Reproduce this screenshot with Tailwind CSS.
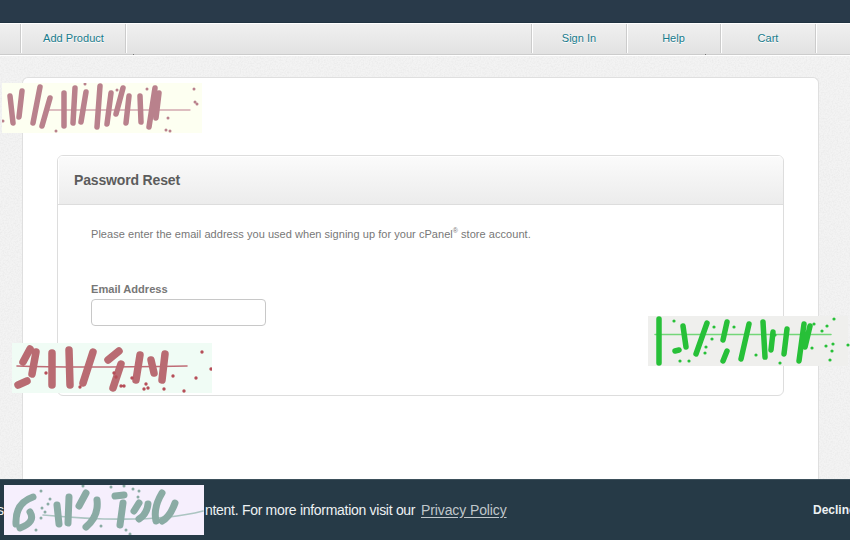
<!DOCTYPE html>
<html lang="en">
<head>
<meta charset="utf-8">
<title>Password Reset</title>
<script src="https://cdn.jsdelivr.net/npm/@tailwindcss/browser@4"></script>
</head>
<body class="relative flex h-[540px] w-[850px] flex-col overflow-hidden bg-[#f3f3f3] font-['Liberation_Sans',Arial,sans-serif] text-[11px] text-[#777]">
<svg class="absolute inset-0" width="850" height="540" aria-hidden="true">
  <filter id="grain"><feTurbulence type="fractalNoise" baseFrequency=".65" numOctaves="2"/><feColorMatrix values="0 0 0 0 .5  0 0 0 0 .5  0 0 0 0 .5  .3 0 0 0 -.11"/></filter>
  <rect width="850" height="540" filter="url(#grain)"/>
</svg>

<header class="relative shrink-0">
  <div class="h-[23px] border-b border-[#203341] bg-[#293a4a]"></div>
  <nav class="flex h-8 border-t border-b border-t-white border-b-[#ccc] bg-linear-to-b from-[#f0f0f0] to-[#e2e2e2] text-[11px] tracking-[0.03px] text-[#187b8c] shadow-[0_1px_0_#fff] [text-shadow:0_1px_0_#fff]">
    <div class="h-[29px] w-[21px] border-r border-[#ccc]"></div>
    <a class="flex h-[29px] w-[105px] justify-center border-r border-l border-r-[#ccc] border-l-white pt-[4px] leading-5">Add Product</a>
    <div class="h-[29px] flex-1 border-l border-white"></div>
    <a class="flex h-[29px] w-[96px] justify-center border-r border-l border-[#ccc] pt-[4px] leading-5 shadow-[inset_1px_0_0_#fff]">Sign In</a>
    <a class="flex h-[29px] w-[94px] justify-center border-r border-[#ccc] pt-[4px] leading-5 shadow-[inset_1px_0_0_#fff]">Help</a>
    <a class="flex h-[29px] w-[95px] justify-center border-r border-[#ccc] pt-[4px] leading-5 shadow-[inset_1px_0_0_#fff]">Cart</a>
    <div class="h-[29px] w-[34px] border-l border-white"></div>
  </nav>
  <i class="absolute top-[54px] left-[133px] h-px w-px bg-[#777]"></i>
  <i class="absolute top-[54px] left-[705px] h-px w-px bg-[#777]"></i>
</header>

<main class="relative mt-[22px] ml-[22px] w-[797px] flex-1 rounded-t-[6px] border border-b-0 border-[#dfdfdf] bg-white px-[34px] pt-[77px]">
  <section class="h-[241px] w-[727px] overflow-hidden rounded-[6px] border border-[#ddd]">
    <h1 class="flex h-[49px] items-center border-b border-[#ddd] bg-linear-to-b from-[#fbfbfb] to-[#ececec] px-[16px] text-[14px] leading-5 font-bold tracking-[-0.16px] text-[#5c5c5c] shadow-[inset_1px_1px_0_#fff]">Password Reset</h1>
    <div class="px-[33px] pt-[19px]">
      <p class="h-5 text-[11px] leading-5 tracking-[0.04px] whitespace-nowrap">Please enter the email address you used when signing up for your cPanel<sup class="relative top-[-5px] align-baseline text-[7px] leading-none">®</sup> store account.</p>
      <label class="mt-[35px] block h-5 text-[11.1px] leading-5 font-bold">Email Address</label>
      <input aria-label="Email Address" class="block h-[27px] w-[175px] rounded-[4px] border border-[#c8c8c8] bg-white">
    </div>
  </section>
</main>

<footer class="relative flex h-[61px] shrink-0 items-center border-t border-[#3d505b] bg-[#263a47] text-[14px] whitespace-nowrap text-[#edf1f3]">
  <span class="-ml-[3px] w-[208px]">s</span>
  <span class="w-[216px] tracking-[-0.29px]">ntent. For more information visit our</span>
  <a class="tracking-[-0.11px] text-[#c0c7cb] underline underline-offset-2">Privacy Policy</a>
  <b class="absolute left-[813px] text-[12px]">Decline</b>
</footer>

<!-- Decorative ink tiles -->
<svg class="absolute top-[83px] left-[2px]" width="200" height="50" fill="none" stroke="#b9818c" stroke-linecap="round" stroke-linejoin="round">
  <rect width="200" height="50" fill="#fdfff1" stroke="none"/>
  <path stroke="#d2a9b0" stroke-width="1.3" d="M45 27H188"/>
  <path stroke-width="5.5" d="M8 13l3 27M20 8l-3 26M38 4l-7 36M48 15l-8 28M62 10v33M73 5l-2 35M84 9l-5 30M98 3l-3 41M109 10l-4 31M121 5l-7 26M127 13l-3 27M138 13l1 26M153 5l-6 39M157 10l-3 25"/>
  <path stroke-width="3" stroke-dasharray="0 100" d="M1 38h1M54 48h1M83 1h1M115 7h1M145 6h1M192 6h1M193 19h1M195 21h1M166 35h1M164 47h1M168 48h1"/>
</svg>
<svg class="absolute top-[343px] left-[12px]" width="200" height="50" fill="none" stroke="#b96b72" stroke-linecap="round" stroke-linejoin="round">
  <rect width="200" height="50" fill="#f0fcf5" stroke="none"/>
  <path stroke="#bf6c76" stroke-width="1.6" d="M5 23Q60 25 175 23"/>
  <path stroke-width="7.5" d="M11 19l7-13M24 9L20 31M15 38l-9 4M40 10v32M57 7l1 35M81 9l-10 31M96 17l11-9M109 21l-8 24M128 12l-4 25M139 17l3 13M153 11l-3 26"/>
  <path stroke="#b64e58" stroke-width="3.4" stroke-dasharray="0 100" d="M190 9h1M199 26h1M184 35h1M161 33h1M172 48h1M152 46h1M132 46h1M136 45h1M134 41h1M120 35h1M104 34h1M102 30h1M34 30h1M68 44h1M109 43h1M112 43h1"/>
</svg>
<svg class="absolute top-[316px] left-[648px]" width="202" height="50" fill="none" stroke="#27c038" stroke-linecap="round" stroke-linejoin="round">
  <rect width="200" height="50" fill="#efefed" stroke="none"/>
  <path stroke="#73d679" stroke-width="1.5" d="M7 18.5H183"/>
  <path stroke-width="5.5" d="M11 3v44M35 10l3 21M27 35l4-1M59 7L48 38M79 6l-4 18M79 35l-4 10M101 8l-8 35M115 6l2 35M125 16l-2 18M139 13l-3 25M156 8l-5 37M162 10l-5 21"/>
  <path stroke-width="3.2" stroke-dasharray="0 100" d="M26 5h1M66 11h1M86 11h1M64 23h1M58 31h1M57 37h1M41 45h1M32 45h1M127 19h1M108 39h1M166 8h1M179 10h1M174 15h1M186 3h1M178 30h1M185 28h1M184 35h1M182 44h1M164 32h1M132 47h1M200 29h1"/>
</svg>
<svg class="absolute top-[485px] left-[4px]" width="200" height="50" fill="none" stroke="#8aaba4" stroke-linecap="round" stroke-linejoin="round">
  <rect width="200" height="50" fill="#f6effd" stroke="none"/>
  <path stroke="#acc5c2" stroke-width="1.6" d="M39 30Q145 40 199 26"/>
  <path stroke-width="7" d="M29 12q-18 6-17 27M26 27q6 10-10 16M53 20l2 19M65 12l-1 26M75 21l7-13M93 15q2 16-11 27M111 11l9-1M119 18l-3 22M130 26l5-8M144 19q-1 10-9 15M158 8q-9 15-6 28M171 18q-5 14-13 18"/>
  <path stroke-width="3" stroke-dasharray="0 100" d="M79 1h1M107 2h1M37 6h1M32 45h1M46 14h1M44 19h1M38 23h1M41 27h1M37 33h1M129 4h1M135 6h1M134 12h1M120 1h1M97 41h1M122 45h1M126 49h1"/>
</svg>
</body>
</html>
